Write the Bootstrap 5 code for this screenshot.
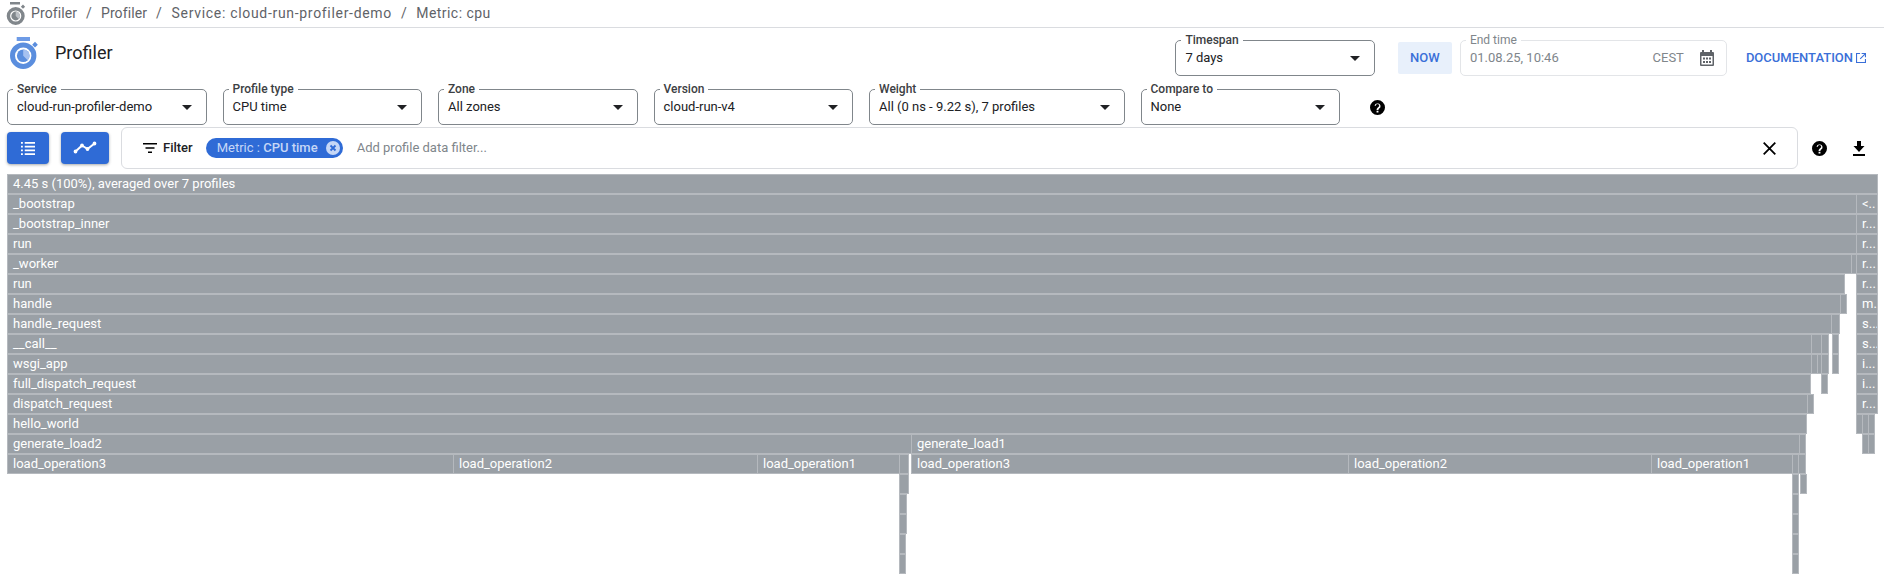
<!DOCTYPE html>
<html lang="en">
<head>
    <meta charset="UTF-8">
    <title>Profiler</title>
    <link href="https://cdn.jsdelivr.net/npm/bootstrap@5.3.0/dist/css/bootstrap.min.css" rel="stylesheet">
    <style>
        body {
            font-family: Roboto, "Liberation Sans", sans-serif;
            font-size: 13px;
            color: #202124;
            background: #fff;
            overflow: hidden;
        }
        .crumb-bar {
            height: 28px;
            border-bottom: 1px solid #dadce0;
            padding-left: 5px;
        }
        .crumb-bar .breadcrumb {
            --bs-breadcrumb-margin-bottom: 0;
            --bs-breadcrumb-divider-color: #5f6368;
            --bs-breadcrumb-item-padding-x: 9px;
            --bs-breadcrumb-item-active-color: #5f6368;
            font-size: 14px;
            line-height: 27px;
            letter-spacing: .1px;
            margin-left: 5px;
        }
        .crumb-bar .crumb-service { letter-spacing: .69px; }
        .crumb-bar .crumb-metric { letter-spacing: .45px; }
        .head-row {
            height: 36px;
            margin: 12px 0 13px;
            padding-left: 10px;
        }
        .app-icon { margin-top: -10px; }
        .app-title {
            font-size: 18px;
            margin-left: 17px;
            margin-top: -12px;
        }
        .head-right { padding-right: 18px; }
        .sel-row { height: 36px; padding-left: 7px; gap: 16px; }
        .outlined {
            position: relative;
            height: 36px;
            border: 1px solid #80868b;
            border-radius: 5px;
            padding: 0 9px;
            line-height: 34px;
            flex: none;
            background: #fff;
        }
        .outlined > label {
            position: absolute;
            left: 5px;
            top: -8px;
            padding: 0 4px;
            font-size: 12px;
            font-weight: 500;
            line-height: 14px;
            background: #fff;
            color: #3c4043;
        }
        .caret-down {
            width: 0;
            height: 0;
            border-left: 5px solid transparent;
            border-right: 5px solid transparent;
            border-top: 5px solid #202124;
            margin-right: 5px;
        }
        .w-std { width: 199.5px; }
        .w-wide { width: 255.5px; }
        .now-btn {
            width: 54px;
            height: 32px;
            background: #e8f0fb;
            color: #3a6fd8;
            font-size: 13px;
            font-weight: 500;
            padding: 0;
            border: 0;
            border-radius: 2px;
            margin: 0 8px 0 23px;
        }
        .end-time { width: 267px; border-color: #e3e5e8; color: #80868b; padding-right: 12px; }
        .end-time > label { color: #80868b; font-weight: 400; }
        .end-zone { margin-right: 16px; }
        .doc-link {
            color: #3a6fd8;
            font-size: 13px;
            font-weight: 500;
            text-decoration: none;
            margin-left: 19px;
        }
        .doc-link svg { margin-left: 3px; }
        .help-sel { margin-left: 14px; }
        .tool-row { height: 42px; margin: 2px 0 5px; padding-left: 7px; }
        .tool-btn {
            height: 32px;
            padding: 0;
            background: #2f6bd6;
            border: 0;
            border-radius: 4px;
            box-shadow: 0 1px 3px rgba(60,64,67,.45);
            margin-top: -1px;
        }
        .tool-list { width: 42px; }
        .tool-chart { width: 48px; margin-left: 12px; }
        .filter-box {
            width: 1677px;
            height: 42px;
            margin-left: 12px;
            padding-left: 21px;
            border: 1px solid #dadce0;
            border-radius: 6px;
        }
        .filter-label { font-size: 13px; font-weight: 500; margin: 0 13px 0 6px; }
        .chip-metric {
            flex: none;
            height: 20px;
            width: 137px;
            border-radius: 10px;
            background: #2f6bd6;
            color: #c6d7f6;
            font-size: 13px;
            line-height: 20px;
            padding-left: 11px;
            white-space: nowrap;
        }
        .chip-metric b { font-weight: 500; }
        .chip-metric svg { margin-right: 3px; }
        .filter-input {
            border: 0;
            padding: 0;
            margin-left: 14px;
            font-size: 13px;
            box-shadow: none !important;
        }
        .filter-input::placeholder { color: #80868b; opacity: 1; }
        .filter-clear { margin: 0 21px 0 16px; }
        .help-tool { margin-left: 14px; }
        .dl-tool { margin-left: 26px; }
        .flame {
            position: relative;
            height: 400px;
        }
        .flame-node {
            position: absolute;
            height: 20px;
            background: #9aa0a6;
            border: 1px solid #b5b9be;
            color: #fff;
            font-size: 13px;
            line-height: 18px;
            padding-left: 5px;
            white-space: nowrap;
            overflow: hidden;
        }
    </style>
</head>
<body>
    <div class="crumb-bar d-flex align-items-center">
        <svg width="21" height="26" viewBox="0 0 21 26">
            <rect x="5" y="1" width="10" height="2.500" fill="#80868b"/>
            <circle cx="10.700" cy="15" r="7.300" fill="none" stroke="#80868b" stroke-width="3.400"/>
            <circle cx="10.700" cy="15" r="4.400" fill="#80868b"/>
            <path d="M10.700 10.600a4.400 4.400 0 0 1 3.100 7.500l-3.100-3.100z" fill="#bdc1c6"/>
            <rect x="16.500" y="4.200" width="3" height="3" transform="rotate(45 18 5.700)" fill="#80868b"/>
        </svg>
        <nav aria-label="breadcrumb">
            <ol class="breadcrumb">
                <li class="breadcrumb-item active">Profiler</li>
                <li class="breadcrumb-item active">Profiler</li>
                <li class="breadcrumb-item active crumb-service">Service: cloud-run-profiler-demo</li>
                <li class="breadcrumb-item active crumb-metric">Metric: cpu</li>
            </ol>
        </nav>
    </div>

    <div class="head-row d-flex align-items-center">
        <svg class="app-icon" width="28" height="32" viewBox="0 0 28 32">
            <rect x="6.700" y="0" width="13.300" height="4" fill="#6e9be6"/>
            <circle cx="13.200" cy="18.700" r="10.700" fill="none" stroke="#5b8ede" stroke-width="5"/>
            <circle cx="13.200" cy="18.700" r="6.300" fill="#5b8ede"/>
            <path d="M13.200 12.400a6.300 6.300 0 0 1 4.500 10.800l-4.500-4.500z" fill="#a6c1f0"/>
            <rect x="23" y="5.700" width="4" height="4" transform="rotate(45 25 7.700)" fill="#5b8ede"/>
        </svg>
        <div class="app-title">Profiler</div>
        <div class="head-right ms-auto d-flex align-items-center">
            <div class="outlined w-std d-flex align-items-center justify-content-between">
                <label>Timespan</label><span>7 days</span><i class="caret-down"></i>
            </div>
            <button class="btn now-btn">NOW</button>
            <div class="outlined end-time d-flex align-items-center">
                <label>End time</label>
                <span>01.08.25, 10:46</span>
                <span class="end-zone ms-auto">CEST</span>
                <svg width="14" height="16" viewBox="0 0 14 16" fill="#5f6368">
                    <path d="M2 0h2v2h6V0h2v2h1a1 1 0 0 1 1 1v12a1 1 0 0 1-1 1H1a1 1 0 0 1-1-1V3a1 1 0 0 1 1-1h1zM1.500 6v8.500h11V6z"/>
                    <path d="M3 7.500h2v2H3zM6 7.500h2v2H6zM9 7.500h2v2H9zM3 11h2v2H3zM6 11h2v2H6zM9 11h2v2H9z"/>
                </svg>
            </div>
            <a class="doc-link d-flex align-items-center" href="#">DOCUMENTATION
                <svg width="10" height="10" viewBox="0 0 11 11" fill="none" stroke="#3a6fd8" stroke-width="1.200">
                    <path d="M4.500 .6H.6v9.800h9.800V6.500M6.200 .6h4.200v4.200M10.400 .6L4.600 6.400"/>
                </svg>
            </a>
        </div>
    </div>

    <div class="sel-row d-flex align-items-center">
        <div class="outlined w-std d-flex align-items-center justify-content-between">
            <label>Service</label><span>cloud-run-profiler-demo</span><i class="caret-down"></i>
        </div>
        <div class="outlined w-std d-flex align-items-center justify-content-between">
            <label>Profile type</label><span>CPU time</span><i class="caret-down"></i>
        </div>
        <div class="outlined w-std d-flex align-items-center justify-content-between">
            <label>Zone</label><span>All zones</span><i class="caret-down"></i>
        </div>
        <div class="outlined w-std d-flex align-items-center justify-content-between">
            <label>Version</label><span>cloud-run-v4</span><i class="caret-down"></i>
        </div>
        <div class="outlined w-wide d-flex align-items-center justify-content-between">
            <label>Weight</label><span>All (0 ns - 9.22 s), 7 profiles</span><i class="caret-down"></i>
        </div>
        <div class="outlined w-std d-flex align-items-center justify-content-between">
            <label>Compare to</label><span>None</span><i class="caret-down"></i>
        </div>
        <svg class="help-sel" width="15" height="15" viewBox="0 0 24 24">
            <path fill="#000" d="M12 0a12 12 0 1 0 0 24 12 12 0 0 0 0-24zm1.500 20h-3v-3h3zm3-8.200c-.9.9-1.900 1.600-2.500 2.600-.4.700-.5 1.100-.5 1.600h-3c0-1.200.3-2.100.9-3 .6-1 1.700-1.600 2.500-2.400.5-.5.800-1 .8-1.600a2.700 2.700 0 0 0-5.400 0H7.200a4.800 4.800 0 1 1 9.300 2.800z"/>
        </svg>
    </div>

    <div class="tool-row d-flex align-items-center">
        <button class="btn tool-btn tool-list d-flex align-items-center justify-content-center" aria-label="List">
            <svg width="14" height="14" viewBox="0 0 15 15" fill="#fff">
                <path d="M0 1h2v2H0zM4 1h11v2H4zM0 5h2v2H0zM4 5h11v2H4zM0 9h2v2H0zM4 9h11v2H4zM0 13h2v2H0zM4 13h11v2H4z"/>
            </svg>
        </button>
        <button class="btn tool-btn tool-chart d-flex align-items-center justify-content-center" aria-label="Chart">
            <svg width="24" height="13" viewBox="0 0 24 13" fill="#fff" stroke="#fff" stroke-width="2" stroke-linecap="round" stroke-linejoin="round">
                <path fill="none" d="M2.500 10.500L9 4.500l5.500 3.500L21.500 2.500"/>
                <circle cx="2.500" cy="10.500" r=".9"/><circle cx="9" cy="4.500" r=".9"/><circle cx="14.500" cy="8" r=".9"/><circle cx="21.500" cy="2.500" r=".9"/>
            </svg>
        </button>
        <div class="filter-box d-flex align-items-center">
            <svg class="flex-shrink-0" width="14" height="10" viewBox="0 0 14 10" fill="#000"><path d="M0 0h14v1.600H0zM2.500 4.200h9v1.600h-9zM5 8.400h4V10H5z"/></svg>
            <span class="filter-label">Filter</span>
            <div class="chip-metric d-flex align-items-center">
                <span>Metric : <b>CPU time</b></span>
                <svg class="ms-auto" width="14" height="14" viewBox="0 0 14 14">
                    <circle cx="7" cy="7" r="7" fill="#c6d7f6"/>
                    <path d="M4.500 4.500l5 5M9.500 4.500l-5 5" stroke="#2f6bd6" stroke-width="1.800"/>
                </svg>
            </div>
            <input class="form-control filter-input" type="text" placeholder="Add profile data filter...">
            <svg class="filter-clear flex-shrink-0" width="13" height="13" viewBox="0 0 13 13"><path d="M.7.7l11.600 11.600M12.300.7L.7 12.300" stroke="#000" stroke-width="1.800" fill="none"/></svg>
        </div>
        <svg class="help-tool" width="15" height="15" viewBox="0 0 24 24">
            <path fill="#000" d="M12 0a12 12 0 1 0 0 24 12 12 0 0 0 0-24zm1.500 20h-3v-3h3zm3-8.200c-.9.9-1.900 1.600-2.500 2.600-.4.700-.5 1.100-.5 1.600h-3c0-1.200.3-2.100.9-3 .6-1 1.700-1.600 2.500-2.400.5-.5.800-1 .8-1.600a2.700 2.700 0 0 0-5.400 0H7.200a4.800 4.800 0 1 1 9.300 2.800z"/>
        </svg>
        <svg class="dl-tool" width="12" height="15" viewBox="0 0 12 15" fill="#000"><path d="M4 0h4v5h3.500L6 11 .5 5H4zM0 13h12v2H0z"/></svg>
    </div>

    <div class="flame" id="flame"></div>

    <script>
        // row, left, right, label
        const nodes = [
            [0, 7, 1878, '4.45 s (100%), averaged over 7 profiles'],
            [1, 7, 1857, '_bootstrap'], [1, 1857, 1878, '<..'],
            [2, 7, 1857, '_bootstrap_inner'], [2, 1857, 1878, 'r...'],
            [3, 7, 1857, 'run'], [3, 1857, 1878, 'r...'],
            [4, 7, 1852, '_worker'], [4, 1852, 1857, ''], [4, 1857, 1878, 'r...'],
            [5, 7, 1845, 'run'], [5, 1857, 1878, 'r...'],
            [6, 7, 1841, 'handle'], [6, 1841, 1845, ''], [6, 1857, 1878, 'm.'],
            [7, 7, 1832, 'handle_request'], [7, 1832, 1840, ''], [7, 1857, 1878, 's...'],
            [8, 7, 1812, '__call__'], [8, 1812, 1822, ''], [8, 1822, 1829, ''], [8, 1833, 1839, ''], [8, 1857, 1878, 's...'],
            [9, 7, 1812, 'wsgi_app'], [9, 1812, 1818, ''], [9, 1818, 1822, ''], [9, 1822, 1829, ''], [9, 1833, 1837, ''], [9, 1857, 1878, 'i...'],
            [10, 7, 1811, 'full_dispatch_request'], [10, 1822, 1828, ''], [10, 1857, 1878, 'i...'],
            [11, 7, 1808, 'dispatch_request'], [11, 1808, 1811, ''], [11, 1857, 1878, 'r...'],
            [12, 7, 1807, 'hello_world'], [12, 1857, 1863, ''], [12, 1863, 1869, ''], [12, 1869, 1874, ''],
            [13, 7, 912, 'generate_load2'], [13, 912, 1800, 'generate_load1'], [13, 1800, 1806, ''], [13, 1863, 1867, ''], [13, 1869, 1872, ''],
            [14, 7, 454, 'load_operation3'], [14, 454, 758, 'load_operation2'], [14, 758, 900, 'load_operation1'], [14, 900, 909, ''],
            [14, 912, 1349, 'load_operation3'], [14, 1349, 1652, 'load_operation2'], [14, 1652, 1793, 'load_operation1'], [14, 1793, 1799, ''], [14, 1799, 1806, ''],
            [15, 900, 909, ''], [15, 1793, 1799, ''], [15, 1801, 1805, ''],
            [16, 900, 907, ''], [16, 1793, 1799, ''],
            [17, 900, 907, ''], [17, 1793, 1799, ''],
            [18, 900, 906, ''], [18, 1793, 1798, ''],
            [19, 900, 905, ''], [19, 1793, 1797, '']
        ];

        const flame = document.getElementById('flame');
        nodes.forEach(([row, left, right, label]) => {
            // neighbours share their 1px border
            const x = left === 7 ? 7 : left - 1;
            const el = document.createElement('div');
            el.className = 'flame-node';
            el.style.top = (row * 20) + 'px';
            el.style.left = x + 'px';
            el.style.width = (right - x) + 'px';
            el.textContent = label;
            flame.appendChild(el);
        });
    </script>
    <script src="https://cdn.jsdelivr.net/npm/bootstrap@5.3.0/dist/js/bootstrap.bundle.min.js"></script>
</body>
</html>
